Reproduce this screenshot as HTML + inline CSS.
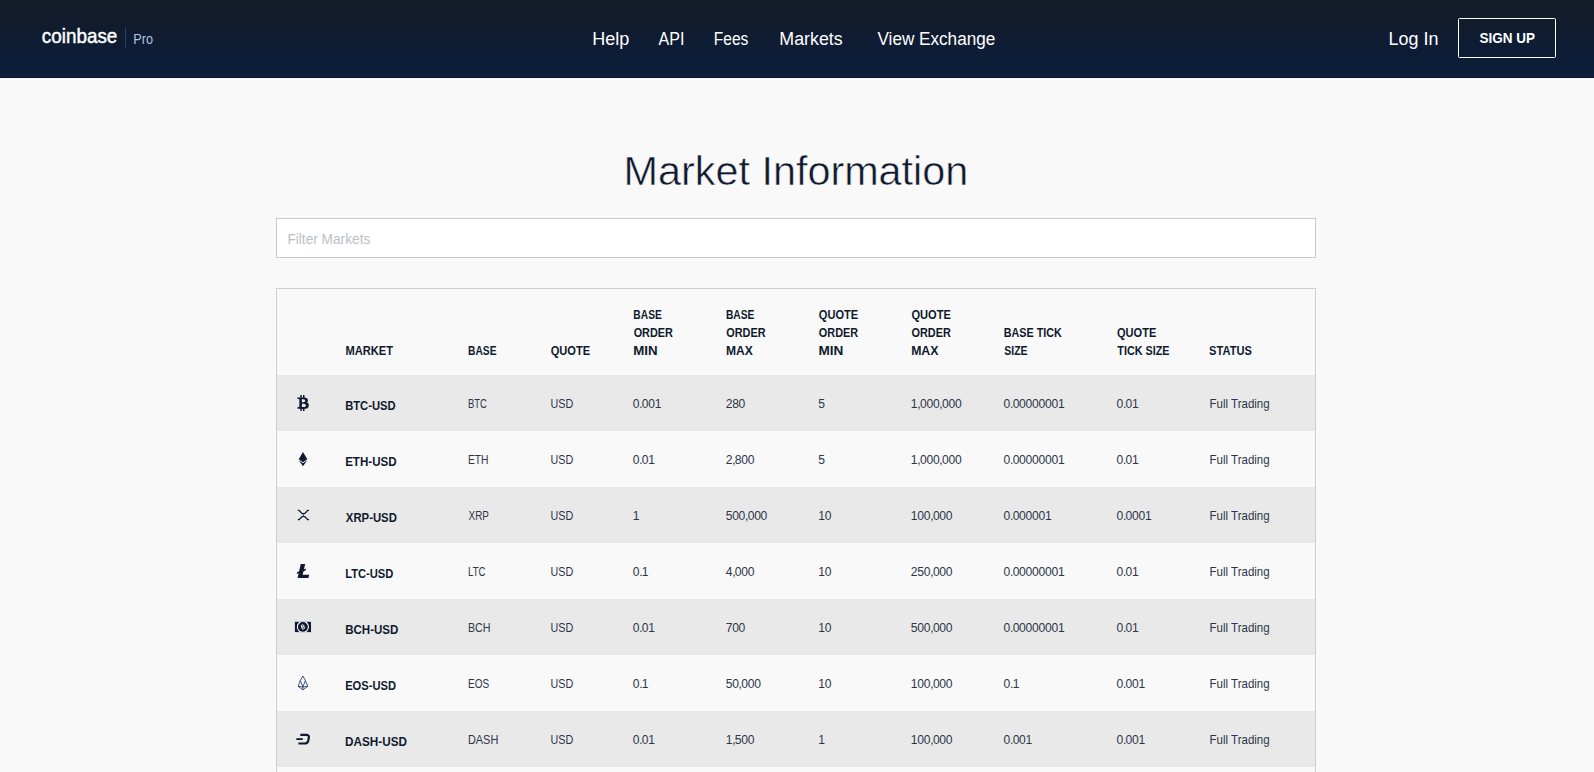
<!DOCTYPE html>
<html lang="en">
<head>
<meta charset="utf-8">
<title>Market Information</title>
<style>
*{box-sizing:border-box;margin:0;padding:0}
html,body{width:1594px;height:772px;overflow:hidden;background:#f9f9f9;font-family:"Liberation Sans",sans-serif;color:#0f1a2e}
body{position:relative}
.t{position:absolute;white-space:nowrap;transform-origin:0 50%;font-family:"Liberation Sans",sans-serif}
#hdr{position:absolute;left:0;top:0;width:1594px;height:78px;background:linear-gradient(180deg,#141a28 0%,#131b2a 18%,#0f1c32 50%,#0b1e3b 100%);border-bottom:1px solid #06122f}
#logosep{position:absolute;left:125px;top:27px;width:1px;height:22px;background:#2b3c63}
#signup{position:absolute;left:1458px;top:18px;width:98px;height:40px;border:1px solid #fff;border-radius:1.5px}
#filter{position:absolute;left:276px;top:218px;width:1040px;height:40px;border:1px solid #c9c9c9;background:#fff}
#tbl{position:absolute;left:276px;top:288px;width:1040px;height:500px;border:1px solid #cfcfcf;background:#f9f9f9}
.row{position:absolute;left:277px;width:1038px;height:56px;background:#e9e9e9}
svg{position:absolute;left:0;top:0;overflow:visible}
</style>
</head>
<body>
<div id="hdr"></div>
<div id="logosep"></div>
<div id="signup"></div>
<div id="filter"></div>
<div id="tbl"></div>
<div class="row" style="top:375px"></div>
<div class="row" style="top:487px"></div>
<div class="row" style="top:599px"></div>
<div class="row" style="top:711px"></div>

<svg width="1594" height="772" viewBox="0 0 1594 772">
<g fill="#0f1a2e" stroke="none">
<!-- BTC -->
<g transform="translate(297.3,395) scale(0.0303,0.03125)">
<path d="M310.204 242.638c27.73-14.18 45.377-39.39 41.28-81.3-5.358-57.351-52.458-76.573-114.85-81.929V0h-48.528v77.203c-12.605 0-25.525.315-38.444.63V0h-48.528v79.409c-17.842.539-38.622.276-97.37 0v51.678c38.314-.678 58.417-3.14 63.023 21.427v217.429c-2.925 19.492-18.524 16.685-53.255 16.071L3.765 443.68c88.481 0 97.37.315 97.37.315V512h48.528v-67.06c13.234.315 26.154.315 38.444.315V512h48.528v-68.005c81.299-4.412 135.647-24.894 142.895-101.467 5.671-61.446-23.32-88.862-69.326-99.89zM150.608 134.553c27.415 0 113.126-8.507 113.126 48.528 0 54.515-85.71 48.212-113.126 48.212v-96.74zm0 251.776V279.821c32.772 0 133.127-9.138 133.127 53.255-.001 60.186-100.355 53.253-133.127 53.253z"/>
</g>
<!-- ETH -->
<path d="M303 451.9 L307.3 459.2 L303 462.2 L298.7 459.2 Z"/>
<path d="M298.7 460.3 L303 463.3 L307.3 460.3 L303 466.2 Z"/>
<!-- LTC -->
<path d="M300.7 564 H305.2 L302.6 574.8 H309.3 L308.4 578 H297.6 Z"/>
<path d="M297.0 572.3 L305.9 568.6 L305.5 570.4 L296.7 574.1 Z"/>
<!-- BCH -->
<rect x="294.9" y="621.8" width="16.1" height="10.3"/>
</g>
<!-- BCH ring -->
<g>
<clipPath id="bchc"><rect x="294.9" y="621.8" width="16.1" height="10.3"/></clipPath>
<circle cx="302.9" cy="626.9" r="5.5" fill="#0f1a2e" stroke="#ffffff" stroke-width="1.1" clip-path="url(#bchc)"/>
<g transform="translate(302.9,626.9) rotate(-18)" fill="none" stroke="#ffffff" stroke-width="0.9">
<path d="M-1.1 -2 V2 M-1.1 -2 H0.3 Q1.3 -2 1.3 -1 Q1.3 0 0.3 0 H-1.1 M0.3 0 Q1.6 0 1.6 1 Q1.6 2 0.3 2 H-1.1"/>
</g>
</g>
<!-- XRP -->
<g fill="none" stroke="#0f1a2e" stroke-width="1.3" stroke-linejoin="round">
<path d="M297.8 510.4 H299.1 L301.6 513 Q303.4 514.4 305.2 513 L307.7 510.4 H309"/>
<path d="M297.8 519.6 H299.1 L301.6 517 Q303.4 515.6 305.2 517 L307.7 519.6 H309"/>
<path d="M303.4 513.9 V516.1" stroke="#2a4680" stroke-width="0.9"/>
</g>
<!-- EOS -->
<g fill="none" stroke="#14305f" stroke-width="0.8" stroke-linejoin="round">
<path d="M302.9 676 L300.3 680.5 L298.1 686.3 L302.9 689.9 L307.8 686.3 L305.4 680.5 Z"/>
<path d="M300.3 680.5 L302.9 687.0 L305.4 680.5 M298.1 686.3 L302.9 687.0 L307.8 686.3 M302.9 687.0 V689.9"/>
</g>
<!-- DASH -->
<g fill="none" stroke="#0f1a2e" stroke-linecap="butt">
<path d="M300.3 734.9 H306.3 Q309.4 734.9 308.8 737.8 L308.3 740.4 Q307.6 743.5 304.6 743.5 H298.4" stroke-width="2.2"/>
<path d="M296.3 739.1 H302.8" stroke-width="1.8"/>
</g>
</svg>

<div class="t" style="transform-origin:0 22.71px;left:41px;top:20px;font-size:20.8px;line-height:31px;font-weight:400;color:#ffffff;transform:translateX(0.86px) scale(0.9062,1.0);-webkit-text-stroke:0.45px #fff;">coinbase</div>
<div class="t" style="transform-origin:0 15.35px;left:133px;top:29px;font-size:14.0px;line-height:21px;font-weight:400;color:#b4c3e0;transform:translateX(0.36px) scale(0.9043,1.07);">Pro</div>
<div class="t" style="transform-origin:0 19.74px;left:592px;top:26px;font-size:18px;line-height:27px;font-weight:400;color:#ffffff;transform:translateX(0.34px) scale(1.0005,1.0);">Help</div>
<div class="t" style="transform-origin:0 19.74px;left:658px;top:26px;font-size:18px;line-height:27px;font-weight:400;color:#ffffff;transform:translateX(0.55px) scale(0.8909,1.0);">API</div>
<div class="t" style="transform-origin:0 19.74px;left:713px;top:26px;font-size:18px;line-height:27px;font-weight:400;color:#ffffff;transform:translateX(0.84px) scale(0.8621,1.0);">Fees</div>
<div class="t" style="transform-origin:0 19.74px;left:779px;top:26px;font-size:18px;line-height:27px;font-weight:400;color:#ffffff;transform:translateX(0.36px) scale(0.9897,1.0);">Markets</div>
<div class="t" style="transform-origin:0 19.74px;left:877px;top:26px;font-size:18px;line-height:27px;font-weight:400;color:#ffffff;transform:translateX(0.45px) scale(0.9519,1.0);">View Exchange</div>
<div class="t" style="transform-origin:0 19.74px;left:1388px;top:26px;font-size:18px;line-height:27px;font-weight:400;color:#ffffff;transform:translateX(0.55px) scale(0.9952,1.0);">Log In</div>
<div class="t" style="transform-origin:0 15.35px;left:1479px;top:28px;font-size:14.0px;line-height:21px;font-weight:700;color:#ffffff;transform:translateX(0.54px) scale(0.9653,1.0);">SIGN UP</div>
<div class="t" style="transform-origin:0 43.86px;left:623px;top:141px;font-size:40.0px;line-height:60px;font-weight:400;color:#0f1a2e;transform:translateX(0.52px) scale(1.0339,1.0);-webkit-text-stroke:0.5px #f9f9f9;">Market Information</div>
<div class="t" style="transform-origin:0 15.35px;left:287px;top:229px;font-size:14.0px;line-height:21px;font-weight:400;color:#bcc0c4;transform:translateX(0.38px) scale(0.9777,1.0);">Filter Markets</div>
<div class="t" style="transform-origin:0 13.16px;left:345px;top:342px;font-size:12.0px;line-height:18px;font-weight:700;color:#0f1a2e;transform:translateX(0.41px) scale(0.9297,1.0);">MARKET</div>
<div class="t" style="transform-origin:0 13.16px;left:468px;top:342px;font-size:12.0px;line-height:18px;font-weight:700;color:#0f1a2e;transform:translateX(0.07px) scale(0.8540,1.0);">BASE</div>
<div class="t" style="transform-origin:0 13.16px;left:550px;top:342px;font-size:12.0px;line-height:18px;font-weight:700;color:#0f1a2e;transform:translateX(0.63px) scale(0.9242,1.0);">QUOTE</div>
<div class="t" style="transform-origin:0 13.16px;left:633px;top:306px;font-size:12.0px;line-height:18px;font-weight:700;color:#0f1a2e;transform:translateX(0.37px) scale(0.8540,1.0);">BASE</div>
<div class="t" style="transform-origin:0 13.16px;left:633px;top:324px;font-size:12.0px;line-height:18px;font-weight:700;color:#0f1a2e;transform:translateX(0.64px) scale(0.9070,1.0);">ORDER</div>
<div class="t" style="transform-origin:0 13.16px;left:633px;top:342px;font-size:12.0px;line-height:18px;font-weight:700;color:#0f1a2e;transform:translateX(0.27px) scale(1.1062,1.0);">MIN</div>
<div class="t" style="transform-origin:0 13.16px;left:725px;top:306px;font-size:12.0px;line-height:18px;font-weight:700;color:#0f1a2e;transform:translateX(0.97px) scale(0.8540,1.0);">BASE</div>
<div class="t" style="transform-origin:0 13.16px;left:726px;top:324px;font-size:12.0px;line-height:18px;font-weight:700;color:#0f1a2e;transform:translateX(0.24px) scale(0.9070,1.0);">ORDER</div>
<div class="t" style="transform-origin:0 13.16px;left:725px;top:342px;font-size:12.0px;line-height:18px;font-weight:700;color:#0f1a2e;transform:translateX(0.95px) scale(1.0054,1.0);">MAX</div>
<div class="t" style="transform-origin:0 13.16px;left:818px;top:306px;font-size:12.0px;line-height:18px;font-weight:700;color:#0f1a2e;transform:translateX(0.83px) scale(0.9242,1.0);">QUOTE</div>
<div class="t" style="transform-origin:0 13.16px;left:818px;top:324px;font-size:12.0px;line-height:18px;font-weight:700;color:#0f1a2e;transform:translateX(0.84px) scale(0.9070,1.0);">ORDER</div>
<div class="t" style="transform-origin:0 13.16px;left:818px;top:342px;font-size:12.0px;line-height:18px;font-weight:700;color:#0f1a2e;transform:translateX(0.45px) scale(1.1307,1.0);">MIN</div>
<div class="t" style="transform-origin:0 13.16px;left:911px;top:306px;font-size:12.0px;line-height:18px;font-weight:700;color:#0f1a2e;transform:translateX(0.43px) scale(0.9242,1.0);">QUOTE</div>
<div class="t" style="transform-origin:0 13.16px;left:911px;top:324px;font-size:12.0px;line-height:18px;font-weight:700;color:#0f1a2e;transform:translateX(0.44px) scale(0.9070,1.0);">ORDER</div>
<div class="t" style="transform-origin:0 13.16px;left:911px;top:342px;font-size:12.0px;line-height:18px;font-weight:700;color:#0f1a2e;transform:translateX(0.13px) scale(1.0248,1.0);">MAX</div>
<div class="t" style="transform-origin:0 13.16px;left:1003px;top:324px;font-size:12.0px;line-height:18px;font-weight:700;color:#0f1a2e;transform:translateX(0.83px) scale(0.8965,1.0);">BASE TICK</div>
<div class="t" style="transform-origin:0 13.16px;left:1004px;top:342px;font-size:12.0px;line-height:18px;font-weight:700;color:#0f1a2e;transform:translateX(0.29px) scale(0.8720,1.0);">SIZE</div>
<div class="t" style="transform-origin:0 13.16px;left:1117px;top:324px;font-size:12.0px;line-height:18px;font-weight:700;color:#0f1a2e;transform:translateX(0.04px) scale(0.9195,1.0);">QUOTE</div>
<div class="t" style="transform-origin:0 13.16px;left:1117px;top:342px;font-size:12.0px;line-height:18px;font-weight:700;color:#0f1a2e;transform:translateX(0.36px) scale(0.8999,1.0);">TICK SIZE</div>
<div class="t" style="transform-origin:0 13.16px;left:1209px;top:342px;font-size:12.0px;line-height:18px;font-weight:700;color:#0f1a2e;transform:translateX(0.07px) scale(0.9260,1.0);">STATUS</div>
<div class="t" style="transform-origin:0 14.50px;left:345px;top:396px;font-size:13.0px;line-height:20px;font-weight:700;color:#0f1a2e;transform:translateX(0.15px) scale(0.8614,1.0);">BTC-USD</div>
<div class="t" style="transform-origin:0 13.19px;left:468px;top:395px;font-size:12.1px;line-height:18px;font-weight:400;color:#2d3649;transform:translateX(0.01px) scale(0.7803,1.0);">BTC</div>
<div class="t" style="transform-origin:0 13.19px;left:550px;top:395px;font-size:12.1px;line-height:18px;font-weight:400;color:#2d3649;transform:translateX(0.45px) scale(0.8918,1.0);">USD</div>
<div class="t" style="transform-origin:0 13.19px;left:632px;top:395px;font-size:12.1px;line-height:18px;font-weight:400;color:#2d3649;transform:translateX(0.67px) scale(1.0000,1.0);"><span style="letter-spacing:-0.260px">0</span><span style="letter-spacing:-0.761px">.</span><span style="letter-spacing:-0.260px">0</span><span style="letter-spacing:-0.260px">0</span><span style="letter-spacing:-0.260px">1</span></div>
<div class="t" style="transform-origin:0 13.19px;left:725px;top:395px;font-size:12.1px;line-height:18px;font-weight:400;color:#2d3649;transform:translateX(0.67px) scale(1.0000,1.0);"><span style="letter-spacing:-0.260px">2</span><span style="letter-spacing:-0.260px">8</span><span style="letter-spacing:-0.260px">0</span></div>
<div class="t" style="transform-origin:0 13.19px;left:818px;top:395px;font-size:12.1px;line-height:18px;font-weight:400;color:#2d3649;transform:translateX(0.27px) scale(1.0000,1.0);"><span style="letter-spacing:-0.260px">5</span></div>
<div class="t" style="transform-origin:0 13.19px;left:910px;top:395px;font-size:12.1px;line-height:18px;font-weight:400;color:#2d3649;transform:translateX(0.87px) scale(1.0000,1.0);"><span style="letter-spacing:-0.260px">1</span><span style="letter-spacing:-0.761px">,</span><span style="letter-spacing:-0.260px">0</span><span style="letter-spacing:-0.260px">0</span><span style="letter-spacing:-0.260px">0</span><span style="letter-spacing:-0.761px">,</span><span style="letter-spacing:-0.260px">0</span><span style="letter-spacing:-0.260px">0</span><span style="letter-spacing:-0.260px">0</span></div>
<div class="t" style="transform-origin:0 13.19px;left:1003px;top:395px;font-size:12.1px;line-height:18px;font-weight:400;color:#2d3649;transform:translateX(0.57px) scale(1.0000,1.0);"><span style="letter-spacing:-0.260px">0</span><span style="letter-spacing:-0.761px">.</span><span style="letter-spacing:-0.260px">0</span><span style="letter-spacing:-0.260px">0</span><span style="letter-spacing:-0.260px">0</span><span style="letter-spacing:-0.260px">0</span><span style="letter-spacing:-0.260px">0</span><span style="letter-spacing:-0.260px">0</span><span style="letter-spacing:-0.260px">0</span><span style="letter-spacing:-0.260px">1</span></div>
<div class="t" style="transform-origin:0 13.19px;left:1116px;top:395px;font-size:12.1px;line-height:18px;font-weight:400;color:#2d3649;transform:translateX(0.47px) scale(1.0000,1.0);"><span style="letter-spacing:-0.260px">0</span><span style="letter-spacing:-0.761px">.</span><span style="letter-spacing:-0.260px">0</span><span style="letter-spacing:-0.260px">1</span></div>
<div class="t" style="transform-origin:0 13.19px;left:1209px;top:395px;font-size:12.1px;line-height:18px;font-weight:400;color:#2d3649;transform:translateX(0.55px) scale(0.9513,1.0);">Full Trading</div>
<div class="t" style="transform-origin:0 14.50px;left:345px;top:452px;font-size:13.0px;line-height:20px;font-weight:700;color:#0f1a2e;transform:translateX(0.13px) scale(0.8901,1.0);">ETH-USD</div>
<div class="t" style="transform-origin:0 13.19px;left:467px;top:451px;font-size:12.1px;line-height:18px;font-weight:400;color:#2d3649;transform:translateX(0.94px) scale(0.8516,1.0);">ETH</div>
<div class="t" style="transform-origin:0 13.19px;left:550px;top:451px;font-size:12.1px;line-height:18px;font-weight:400;color:#2d3649;transform:translateX(0.45px) scale(0.8918,1.0);">USD</div>
<div class="t" style="transform-origin:0 13.19px;left:632px;top:451px;font-size:12.1px;line-height:18px;font-weight:400;color:#2d3649;transform:translateX(0.67px) scale(1.0000,1.0);"><span style="letter-spacing:-0.260px">0</span><span style="letter-spacing:-0.761px">.</span><span style="letter-spacing:-0.260px">0</span><span style="letter-spacing:-0.260px">1</span></div>
<div class="t" style="transform-origin:0 13.19px;left:725px;top:451px;font-size:12.1px;line-height:18px;font-weight:400;color:#2d3649;transform:translateX(0.67px) scale(1.0000,1.0);"><span style="letter-spacing:-0.260px">2</span><span style="letter-spacing:-0.761px">,</span><span style="letter-spacing:-0.260px">8</span><span style="letter-spacing:-0.260px">0</span><span style="letter-spacing:-0.260px">0</span></div>
<div class="t" style="transform-origin:0 13.19px;left:818px;top:451px;font-size:12.1px;line-height:18px;font-weight:400;color:#2d3649;transform:translateX(0.27px) scale(1.0000,1.0);"><span style="letter-spacing:-0.260px">5</span></div>
<div class="t" style="transform-origin:0 13.19px;left:910px;top:451px;font-size:12.1px;line-height:18px;font-weight:400;color:#2d3649;transform:translateX(0.87px) scale(1.0000,1.0);"><span style="letter-spacing:-0.260px">1</span><span style="letter-spacing:-0.761px">,</span><span style="letter-spacing:-0.260px">0</span><span style="letter-spacing:-0.260px">0</span><span style="letter-spacing:-0.260px">0</span><span style="letter-spacing:-0.761px">,</span><span style="letter-spacing:-0.260px">0</span><span style="letter-spacing:-0.260px">0</span><span style="letter-spacing:-0.260px">0</span></div>
<div class="t" style="transform-origin:0 13.19px;left:1003px;top:451px;font-size:12.1px;line-height:18px;font-weight:400;color:#2d3649;transform:translateX(0.57px) scale(1.0000,1.0);"><span style="letter-spacing:-0.260px">0</span><span style="letter-spacing:-0.761px">.</span><span style="letter-spacing:-0.260px">0</span><span style="letter-spacing:-0.260px">0</span><span style="letter-spacing:-0.260px">0</span><span style="letter-spacing:-0.260px">0</span><span style="letter-spacing:-0.260px">0</span><span style="letter-spacing:-0.260px">0</span><span style="letter-spacing:-0.260px">0</span><span style="letter-spacing:-0.260px">1</span></div>
<div class="t" style="transform-origin:0 13.19px;left:1116px;top:451px;font-size:12.1px;line-height:18px;font-weight:400;color:#2d3649;transform:translateX(0.47px) scale(1.0000,1.0);"><span style="letter-spacing:-0.260px">0</span><span style="letter-spacing:-0.761px">.</span><span style="letter-spacing:-0.260px">0</span><span style="letter-spacing:-0.260px">1</span></div>
<div class="t" style="transform-origin:0 13.19px;left:1209px;top:451px;font-size:12.1px;line-height:18px;font-weight:400;color:#2d3649;transform:translateX(0.55px) scale(0.9513,1.0);">Full Trading</div>
<div class="t" style="transform-origin:0 14.50px;left:345px;top:508px;font-size:13.0px;line-height:20px;font-weight:700;color:#0f1a2e;transform:translateX(0.85px) scale(0.8716,1.0);">XRP-USD</div>
<div class="t" style="transform-origin:0 13.19px;left:468px;top:507px;font-size:12.1px;line-height:18px;font-weight:400;color:#2d3649;transform:translateX(0.55px) scale(0.8164,1.0);">XRP</div>
<div class="t" style="transform-origin:0 13.19px;left:550px;top:507px;font-size:12.1px;line-height:18px;font-weight:400;color:#2d3649;transform:translateX(0.45px) scale(0.8918,1.0);">USD</div>
<div class="t" style="transform-origin:0 13.19px;left:632px;top:507px;font-size:12.1px;line-height:18px;font-weight:400;color:#2d3649;transform:translateX(0.67px) scale(1.0000,1.0);"><span style="letter-spacing:-0.260px">1</span></div>
<div class="t" style="transform-origin:0 13.19px;left:725px;top:507px;font-size:12.1px;line-height:18px;font-weight:400;color:#2d3649;transform:translateX(0.67px) scale(1.0000,1.0);"><span style="letter-spacing:-0.260px">5</span><span style="letter-spacing:-0.260px">0</span><span style="letter-spacing:-0.260px">0</span><span style="letter-spacing:-0.761px">,</span><span style="letter-spacing:-0.260px">0</span><span style="letter-spacing:-0.260px">0</span><span style="letter-spacing:-0.260px">0</span></div>
<div class="t" style="transform-origin:0 13.19px;left:818px;top:507px;font-size:12.1px;line-height:18px;font-weight:400;color:#2d3649;transform:translateX(0.27px) scale(1.0000,1.0);"><span style="letter-spacing:-0.260px">1</span><span style="letter-spacing:-0.260px">0</span></div>
<div class="t" style="transform-origin:0 13.19px;left:910px;top:507px;font-size:12.1px;line-height:18px;font-weight:400;color:#2d3649;transform:translateX(0.87px) scale(1.0000,1.0);"><span style="letter-spacing:-0.260px">1</span><span style="letter-spacing:-0.260px">0</span><span style="letter-spacing:-0.260px">0</span><span style="letter-spacing:-0.761px">,</span><span style="letter-spacing:-0.260px">0</span><span style="letter-spacing:-0.260px">0</span><span style="letter-spacing:-0.260px">0</span></div>
<div class="t" style="transform-origin:0 13.19px;left:1003px;top:507px;font-size:12.1px;line-height:18px;font-weight:400;color:#2d3649;transform:translateX(0.57px) scale(1.0000,1.0);"><span style="letter-spacing:-0.260px">0</span><span style="letter-spacing:-0.761px">.</span><span style="letter-spacing:-0.260px">0</span><span style="letter-spacing:-0.260px">0</span><span style="letter-spacing:-0.260px">0</span><span style="letter-spacing:-0.260px">0</span><span style="letter-spacing:-0.260px">0</span><span style="letter-spacing:-0.260px">1</span></div>
<div class="t" style="transform-origin:0 13.19px;left:1116px;top:507px;font-size:12.1px;line-height:18px;font-weight:400;color:#2d3649;transform:translateX(0.47px) scale(1.0000,1.0);"><span style="letter-spacing:-0.260px">0</span><span style="letter-spacing:-0.761px">.</span><span style="letter-spacing:-0.260px">0</span><span style="letter-spacing:-0.260px">0</span><span style="letter-spacing:-0.260px">0</span><span style="letter-spacing:-0.260px">1</span></div>
<div class="t" style="transform-origin:0 13.19px;left:1209px;top:507px;font-size:12.1px;line-height:18px;font-weight:400;color:#2d3649;transform:translateX(0.55px) scale(0.9513,1.0);">Full Trading</div>
<div class="t" style="transform-origin:0 14.50px;left:345px;top:564px;font-size:13.0px;line-height:20px;font-weight:700;color:#0f1a2e;transform:translateX(0.15px) scale(0.8592,1.0);">LTC-USD</div>
<div class="t" style="transform-origin:0 13.19px;left:467px;top:563px;font-size:12.1px;line-height:18px;font-weight:400;color:#2d3649;transform:translateX(0.99px) scale(0.7972,1.0);">LTC</div>
<div class="t" style="transform-origin:0 13.19px;left:550px;top:563px;font-size:12.1px;line-height:18px;font-weight:400;color:#2d3649;transform:translateX(0.45px) scale(0.8918,1.0);">USD</div>
<div class="t" style="transform-origin:0 13.19px;left:632px;top:563px;font-size:12.1px;line-height:18px;font-weight:400;color:#2d3649;transform:translateX(0.67px) scale(1.0000,1.0);"><span style="letter-spacing:-0.260px">0</span><span style="letter-spacing:-0.761px">.</span><span style="letter-spacing:-0.260px">1</span></div>
<div class="t" style="transform-origin:0 13.19px;left:725px;top:563px;font-size:12.1px;line-height:18px;font-weight:400;color:#2d3649;transform:translateX(0.67px) scale(1.0000,1.0);"><span style="letter-spacing:-0.260px">4</span><span style="letter-spacing:-0.761px">,</span><span style="letter-spacing:-0.260px">0</span><span style="letter-spacing:-0.260px">0</span><span style="letter-spacing:-0.260px">0</span></div>
<div class="t" style="transform-origin:0 13.19px;left:818px;top:563px;font-size:12.1px;line-height:18px;font-weight:400;color:#2d3649;transform:translateX(0.27px) scale(1.0000,1.0);"><span style="letter-spacing:-0.260px">1</span><span style="letter-spacing:-0.260px">0</span></div>
<div class="t" style="transform-origin:0 13.19px;left:910px;top:563px;font-size:12.1px;line-height:18px;font-weight:400;color:#2d3649;transform:translateX(0.87px) scale(1.0000,1.0);"><span style="letter-spacing:-0.260px">2</span><span style="letter-spacing:-0.260px">5</span><span style="letter-spacing:-0.260px">0</span><span style="letter-spacing:-0.761px">,</span><span style="letter-spacing:-0.260px">0</span><span style="letter-spacing:-0.260px">0</span><span style="letter-spacing:-0.260px">0</span></div>
<div class="t" style="transform-origin:0 13.19px;left:1003px;top:563px;font-size:12.1px;line-height:18px;font-weight:400;color:#2d3649;transform:translateX(0.57px) scale(1.0000,1.0);"><span style="letter-spacing:-0.260px">0</span><span style="letter-spacing:-0.761px">.</span><span style="letter-spacing:-0.260px">0</span><span style="letter-spacing:-0.260px">0</span><span style="letter-spacing:-0.260px">0</span><span style="letter-spacing:-0.260px">0</span><span style="letter-spacing:-0.260px">0</span><span style="letter-spacing:-0.260px">0</span><span style="letter-spacing:-0.260px">0</span><span style="letter-spacing:-0.260px">1</span></div>
<div class="t" style="transform-origin:0 13.19px;left:1116px;top:563px;font-size:12.1px;line-height:18px;font-weight:400;color:#2d3649;transform:translateX(0.47px) scale(1.0000,1.0);"><span style="letter-spacing:-0.260px">0</span><span style="letter-spacing:-0.761px">.</span><span style="letter-spacing:-0.260px">0</span><span style="letter-spacing:-0.260px">1</span></div>
<div class="t" style="transform-origin:0 13.19px;left:1209px;top:563px;font-size:12.1px;line-height:18px;font-weight:400;color:#2d3649;transform:translateX(0.55px) scale(0.9513,1.0);">Full Trading</div>
<div class="t" style="transform-origin:0 14.50px;left:345px;top:620px;font-size:13.0px;line-height:20px;font-weight:700;color:#0f1a2e;transform:translateX(0.13px) scale(0.8879,1.0);">BCH-USD</div>
<div class="t" style="transform-origin:0 13.19px;left:467px;top:619px;font-size:12.1px;line-height:18px;font-weight:400;color:#2d3649;transform:translateX(0.91px) scale(0.8834,1.0);">BCH</div>
<div class="t" style="transform-origin:0 13.19px;left:550px;top:619px;font-size:12.1px;line-height:18px;font-weight:400;color:#2d3649;transform:translateX(0.45px) scale(0.8918,1.0);">USD</div>
<div class="t" style="transform-origin:0 13.19px;left:632px;top:619px;font-size:12.1px;line-height:18px;font-weight:400;color:#2d3649;transform:translateX(0.67px) scale(1.0000,1.0);"><span style="letter-spacing:-0.260px">0</span><span style="letter-spacing:-0.761px">.</span><span style="letter-spacing:-0.260px">0</span><span style="letter-spacing:-0.260px">1</span></div>
<div class="t" style="transform-origin:0 13.19px;left:725px;top:619px;font-size:12.1px;line-height:18px;font-weight:400;color:#2d3649;transform:translateX(0.67px) scale(1.0000,1.0);"><span style="letter-spacing:-0.260px">7</span><span style="letter-spacing:-0.260px">0</span><span style="letter-spacing:-0.260px">0</span></div>
<div class="t" style="transform-origin:0 13.19px;left:818px;top:619px;font-size:12.1px;line-height:18px;font-weight:400;color:#2d3649;transform:translateX(0.27px) scale(1.0000,1.0);"><span style="letter-spacing:-0.260px">1</span><span style="letter-spacing:-0.260px">0</span></div>
<div class="t" style="transform-origin:0 13.19px;left:910px;top:619px;font-size:12.1px;line-height:18px;font-weight:400;color:#2d3649;transform:translateX(0.87px) scale(1.0000,1.0);"><span style="letter-spacing:-0.260px">5</span><span style="letter-spacing:-0.260px">0</span><span style="letter-spacing:-0.260px">0</span><span style="letter-spacing:-0.761px">,</span><span style="letter-spacing:-0.260px">0</span><span style="letter-spacing:-0.260px">0</span><span style="letter-spacing:-0.260px">0</span></div>
<div class="t" style="transform-origin:0 13.19px;left:1003px;top:619px;font-size:12.1px;line-height:18px;font-weight:400;color:#2d3649;transform:translateX(0.57px) scale(1.0000,1.0);"><span style="letter-spacing:-0.260px">0</span><span style="letter-spacing:-0.761px">.</span><span style="letter-spacing:-0.260px">0</span><span style="letter-spacing:-0.260px">0</span><span style="letter-spacing:-0.260px">0</span><span style="letter-spacing:-0.260px">0</span><span style="letter-spacing:-0.260px">0</span><span style="letter-spacing:-0.260px">0</span><span style="letter-spacing:-0.260px">0</span><span style="letter-spacing:-0.260px">1</span></div>
<div class="t" style="transform-origin:0 13.19px;left:1116px;top:619px;font-size:12.1px;line-height:18px;font-weight:400;color:#2d3649;transform:translateX(0.47px) scale(1.0000,1.0);"><span style="letter-spacing:-0.260px">0</span><span style="letter-spacing:-0.761px">.</span><span style="letter-spacing:-0.260px">0</span><span style="letter-spacing:-0.260px">1</span></div>
<div class="t" style="transform-origin:0 13.19px;left:1209px;top:619px;font-size:12.1px;line-height:18px;font-weight:400;color:#2d3649;transform:translateX(0.55px) scale(0.9513,1.0);">Full Trading</div>
<div class="t" style="transform-origin:0 14.50px;left:345px;top:676px;font-size:13.0px;line-height:20px;font-weight:700;color:#0f1a2e;transform:translateX(0.15px) scale(0.8608,1.0);">EOS-USD</div>
<div class="t" style="transform-origin:0 13.19px;left:467px;top:675px;font-size:12.1px;line-height:18px;font-weight:400;color:#2d3649;transform:translateX(0.96px) scale(0.8263,1.0);">EOS</div>
<div class="t" style="transform-origin:0 13.19px;left:550px;top:675px;font-size:12.1px;line-height:18px;font-weight:400;color:#2d3649;transform:translateX(0.45px) scale(0.8918,1.0);">USD</div>
<div class="t" style="transform-origin:0 13.19px;left:632px;top:675px;font-size:12.1px;line-height:18px;font-weight:400;color:#2d3649;transform:translateX(0.67px) scale(1.0000,1.0);"><span style="letter-spacing:-0.260px">0</span><span style="letter-spacing:-0.761px">.</span><span style="letter-spacing:-0.260px">1</span></div>
<div class="t" style="transform-origin:0 13.19px;left:725px;top:675px;font-size:12.1px;line-height:18px;font-weight:400;color:#2d3649;transform:translateX(0.67px) scale(1.0000,1.0);"><span style="letter-spacing:-0.260px">5</span><span style="letter-spacing:-0.260px">0</span><span style="letter-spacing:-0.761px">,</span><span style="letter-spacing:-0.260px">0</span><span style="letter-spacing:-0.260px">0</span><span style="letter-spacing:-0.260px">0</span></div>
<div class="t" style="transform-origin:0 13.19px;left:818px;top:675px;font-size:12.1px;line-height:18px;font-weight:400;color:#2d3649;transform:translateX(0.27px) scale(1.0000,1.0);"><span style="letter-spacing:-0.260px">1</span><span style="letter-spacing:-0.260px">0</span></div>
<div class="t" style="transform-origin:0 13.19px;left:910px;top:675px;font-size:12.1px;line-height:18px;font-weight:400;color:#2d3649;transform:translateX(0.87px) scale(1.0000,1.0);"><span style="letter-spacing:-0.260px">1</span><span style="letter-spacing:-0.260px">0</span><span style="letter-spacing:-0.260px">0</span><span style="letter-spacing:-0.761px">,</span><span style="letter-spacing:-0.260px">0</span><span style="letter-spacing:-0.260px">0</span><span style="letter-spacing:-0.260px">0</span></div>
<div class="t" style="transform-origin:0 13.19px;left:1003px;top:675px;font-size:12.1px;line-height:18px;font-weight:400;color:#2d3649;transform:translateX(0.57px) scale(1.0000,1.0);"><span style="letter-spacing:-0.260px">0</span><span style="letter-spacing:-0.761px">.</span><span style="letter-spacing:-0.260px">1</span></div>
<div class="t" style="transform-origin:0 13.19px;left:1116px;top:675px;font-size:12.1px;line-height:18px;font-weight:400;color:#2d3649;transform:translateX(0.47px) scale(1.0000,1.0);"><span style="letter-spacing:-0.260px">0</span><span style="letter-spacing:-0.761px">.</span><span style="letter-spacing:-0.260px">0</span><span style="letter-spacing:-0.260px">0</span><span style="letter-spacing:-0.260px">1</span></div>
<div class="t" style="transform-origin:0 13.19px;left:1209px;top:675px;font-size:12.1px;line-height:18px;font-weight:400;color:#2d3649;transform:translateX(0.55px) scale(0.9513,1.0);">Full Trading</div>
<div class="t" style="transform-origin:0 14.50px;left:345px;top:732px;font-size:13.0px;line-height:20px;font-weight:700;color:#0f1a2e;transform:translateX(0.12px) scale(0.9013,1.0);">DASH-USD</div>
<div class="t" style="transform-origin:0 13.19px;left:467px;top:731px;font-size:12.1px;line-height:18px;font-weight:400;color:#2d3649;transform:translateX(0.89px) scale(0.9045,1.0);">DASH</div>
<div class="t" style="transform-origin:0 13.19px;left:550px;top:731px;font-size:12.1px;line-height:18px;font-weight:400;color:#2d3649;transform:translateX(0.45px) scale(0.8918,1.0);">USD</div>
<div class="t" style="transform-origin:0 13.19px;left:632px;top:731px;font-size:12.1px;line-height:18px;font-weight:400;color:#2d3649;transform:translateX(0.67px) scale(1.0000,1.0);"><span style="letter-spacing:-0.260px">0</span><span style="letter-spacing:-0.761px">.</span><span style="letter-spacing:-0.260px">0</span><span style="letter-spacing:-0.260px">1</span></div>
<div class="t" style="transform-origin:0 13.19px;left:725px;top:731px;font-size:12.1px;line-height:18px;font-weight:400;color:#2d3649;transform:translateX(0.67px) scale(1.0000,1.0);"><span style="letter-spacing:-0.260px">1</span><span style="letter-spacing:-0.761px">,</span><span style="letter-spacing:-0.260px">5</span><span style="letter-spacing:-0.260px">0</span><span style="letter-spacing:-0.260px">0</span></div>
<div class="t" style="transform-origin:0 13.19px;left:818px;top:731px;font-size:12.1px;line-height:18px;font-weight:400;color:#2d3649;transform:translateX(0.27px) scale(1.0000,1.0);"><span style="letter-spacing:-0.260px">1</span></div>
<div class="t" style="transform-origin:0 13.19px;left:910px;top:731px;font-size:12.1px;line-height:18px;font-weight:400;color:#2d3649;transform:translateX(0.87px) scale(1.0000,1.0);"><span style="letter-spacing:-0.260px">1</span><span style="letter-spacing:-0.260px">0</span><span style="letter-spacing:-0.260px">0</span><span style="letter-spacing:-0.761px">,</span><span style="letter-spacing:-0.260px">0</span><span style="letter-spacing:-0.260px">0</span><span style="letter-spacing:-0.260px">0</span></div>
<div class="t" style="transform-origin:0 13.19px;left:1003px;top:731px;font-size:12.1px;line-height:18px;font-weight:400;color:#2d3649;transform:translateX(0.57px) scale(1.0000,1.0);"><span style="letter-spacing:-0.260px">0</span><span style="letter-spacing:-0.761px">.</span><span style="letter-spacing:-0.260px">0</span><span style="letter-spacing:-0.260px">0</span><span style="letter-spacing:-0.260px">1</span></div>
<div class="t" style="transform-origin:0 13.19px;left:1116px;top:731px;font-size:12.1px;line-height:18px;font-weight:400;color:#2d3649;transform:translateX(0.47px) scale(1.0000,1.0);"><span style="letter-spacing:-0.260px">0</span><span style="letter-spacing:-0.761px">.</span><span style="letter-spacing:-0.260px">0</span><span style="letter-spacing:-0.260px">0</span><span style="letter-spacing:-0.260px">1</span></div>
<div class="t" style="transform-origin:0 13.19px;left:1209px;top:731px;font-size:12.1px;line-height:18px;font-weight:400;color:#2d3649;transform:translateX(0.55px) scale(0.9513,1.0);">Full Trading</div>
</body>
</html>
